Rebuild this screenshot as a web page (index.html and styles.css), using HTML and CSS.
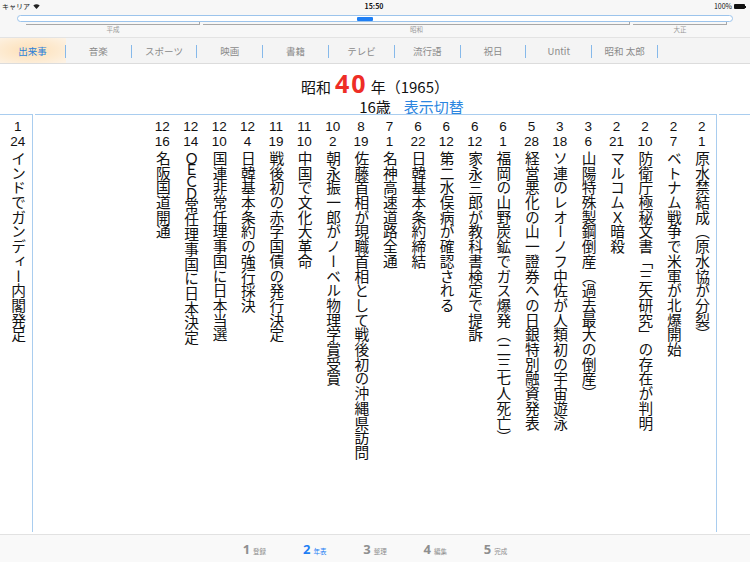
FILE: index.html
```html
<!DOCTYPE html>
<html lang="ja">
<head>
<meta charset="utf-8">
<title>年表</title>
<link rel="stylesheet" href="styles.css">
</head>
<body>
<div class="statusbar">
  <div class="sb-left">
    <span>キャリア</span>
    <svg class="wifi" width="7" height="5" viewBox="0 0 14 10"><path d="M7 10 L0.6 3.2 A9.5 9.5 0 0 1 13.4 3.2 Z" fill="#222"/></svg>
  </div>
  <div class="sb-time">15:50</div>
  <div class="sb-right">
    <span>100%</span>
    <span class="battery"><span class="bat-body"></span><span class="bat-nub"></span></span>
  </div>
</div>

<div class="timeline">
  <div class="track"><div class="thumb" style="left: 339px"></div></div>
  <div class="eras">
    <div class="era" style="width: 174px"><div class="era-line"></div><div class="era-label">平成</div></div>
    <div class="era" style="width: 427px"><div class="era-line"></div><div class="era-label">昭和</div></div>
    <div class="era" style="width: 94px"><div class="era-line"></div><div class="era-label">大正</div></div>
  </div>
</div>

<nav class="tabs">
  <div class="tab selected"><span class="tab-label">出来事</span></div>
  <div class="tab"><span class="tab-label">音楽</span></div>
  <div class="tab"><span class="tab-label">スポーツ</span></div>
  <div class="tab"><span class="tab-label">映画</span></div>
  <div class="tab"><span class="tab-label">書籍</span></div>
  <div class="tab"><span class="tab-label">テレビ</span></div>
  <div class="tab"><span class="tab-label">流行語</span></div>
  <div class="tab"><span class="tab-label">祝日</span></div>
  <div class="tab"><span class="tab-label">Untit</span></div>
  <div class="tab"><span class="tab-label">昭和 太郎</span></div>
</nav>

<header class="yearhead">
  <div class="yh-line1"><span>昭和</span><span class="yh-num">40</span><span>年（1965）</span></div>
  <div class="yh-line2"><span class="yh-age">16歳</span><span class="yh-toggle">表示切替</span></div>
</header>

<main class="pages">
  <section class="page page-prev">
    <div class="event"><div class="md">1<br>24</div><div class="txt">インドでガンディー内閣発足</div></div>
  </section>
  <section class="page page-cur">
    <div class="event"><div class="md">2<br>1</div><div class="txt">原水禁結成（原水協が分裂）</div></div>
    <div class="event"><div class="md">2<br>7</div><div class="txt">ベトナム戦争で米軍が北爆開始</div></div>
    <div class="event"><div class="md">2<br>10</div><div class="txt">防衛庁極秘文書「三矢研究」の存在が判明</div></div>
    <div class="event"><div class="md">2<br>21</div><div class="txt">マルコムＸ暗殺</div></div>
    <div class="event"><div class="md">3<br>6</div><div class="txt">山陽特殊製鋼倒産（過去最大の倒産）</div></div>
    <div class="event"><div class="md">3<br>18</div><div class="txt">ソ連のレオーノフ中佐が人類初の宇宙遊泳</div></div>
    <div class="event"><div class="md">5<br>28</div><div class="txt">経営悪化の山一證券への日銀特別融資発表</div></div>
    <div class="event"><div class="md">6<br>1</div><div class="txt">福岡の山野炭鉱でガス爆発（二三七人死亡）</div></div>
    <div class="event"><div class="md">6<br>12</div><div class="txt">家永三郎が教科書検定で提訴</div></div>
    <div class="event"><div class="md">6<br>12</div><div class="txt">第二水俣病が確認される</div></div>
    <div class="event"><div class="md">6<br>22</div><div class="txt">日韓基本条約締結</div></div>
    <div class="event"><div class="md">7<br>1</div><div class="txt">名神高速道路全通</div></div>
    <div class="event"><div class="md">8<br>19</div><div class="txt">佐藤首相が現職首相として戦後初の沖縄県訪問</div></div>
    <div class="event"><div class="md">10<br>2</div><div class="txt">朝永振一郎がノーベル物理学賞受賞</div></div>
    <div class="event"><div class="md">11<br>10</div><div class="txt">中国で文化大革命</div></div>
    <div class="event"><div class="md">11<br>19</div><div class="txt">戦後初の赤字国債の発行決定</div></div>
    <div class="event"><div class="md">12<br>4</div><div class="txt">日韓基本条約の強行採決</div></div>
    <div class="event"><div class="md">12<br>10</div><div class="txt">国連非常任理事国に日本当選</div></div>
    <div class="event"><div class="md">12<br>14</div><div class="txt"><span class="latin">ＯＥＣＤ</span>常任理事国に日本決定</div></div>
    <div class="event"><div class="md">12<br>16</div><div class="txt">名阪国道開通</div></div>
  </section>
  <section class="page page-next"></section>
</main>

<footer class="steps">
  <div class="step"><span class="step-num">1</span><span class="step-label">登録</span></div>
  <div class="step active"><span class="step-num">2</span><span class="step-label">年表</span></div>
  <div class="step"><span class="step-num">3</span><span class="step-label">整理</span></div>
  <div class="step"><span class="step-num">4</span><span class="step-label">編集</span></div>
  <div class="step"><span class="step-num">5</span><span class="step-label">完成</span></div>
</footer>
</body>
</html>
```

FILE: styles.css
```css
* {
  box-sizing: border-box;
  margin: 0;
  padding: 0;
}

html,
body {
  width: 750px;
  height: 562px;
  overflow: hidden;
}

body {
  font-family: "Noto Sans CJK JP", "Noto Sans", sans-serif;
  color: #111;
  background: #fff;
  display: flex;
  flex-direction: column;
}

/* status bar */
.statusbar {
  height: 13px;
  flex: none;
  background: #f7f7f7;
  display: grid;
  grid-template-columns: 1fr auto 1fr;
  align-items: center;
  padding: 0 4px 0 2px;
  font-size: 7px;
  line-height: 13px;
  color: #111;
}

.sb-left {
  display: flex;
  align-items: center;
  gap: 3px;
}

.sb-time {
  font-weight: 700;
}

.sb-right {
  justify-self: end;
  display: flex;
  align-items: center;
  gap: 2px;
}

.battery {
  display: flex;
  align-items: center;
}

.bat-body {
  width: 11px;
  height: 5px;
  background: #111;
  border-radius: 1px;
}

.bat-nub {
  width: 1px;
  height: 2px;
  background: #111;
}

/* timeline slider */
.timeline {
  height: 24px;
  flex: none;
  background: #f7f7f7;
  padding-top: 2px;
}

.track {
  position: relative;
  margin: 0 17px;
  height: 7px;
  border: 1px solid #9cc4ec;
  border-radius: 4px;
  background: #fff;
}

.thumb {
  position: absolute;
  top: 1px;
  width: 16px;
  height: 4px;
  background: #1f7ff4;
  border-radius: 1px;
}

.eras {
  display: flex;
  margin-left: 26px;
  gap: 3px;
}

.era {
  display: flex;
  flex-direction: column;
}

.era-line {
  height: 3px;
  border-bottom: 1px solid #a8a8a8;
  border-right: 1px solid #a8a8a8;
}

.era-label {
  font-size: 6.5px;
  line-height: 8px;
  color: #9a9a9a;
  text-align: center;
}

/* tabs */
.tabs {
  height: 27px;
  flex: none;
  background: #f4f4f4;
  border-top: 1px solid #e3e3e3;
  border-bottom: 1px solid #dcdcdc;
  display: flex;
}

.tab {
  width: 65.8px;
  flex: none;
  display: flex;
  align-items: center;
  padding-top: 1px;
}

.tab.selected {
  background: radial-gradient(ellipse at 45% 50%, #fde0b8 0%, #fdebd2 60%, #fdf3e6 100%);
}

.tab-label {
  flex: 1;
  height: 13px;
  line-height: 13px;
  border-right: 1px solid #86b9ea;
  text-align: center;
  font-size: 9.5px;
  color: #8a8a8a;
}

.tab.selected .tab-label {
  color: #2a7fd8;
}

/* year header */
.yearhead {
  height: 50px;
  flex: none;
  display: flex;
  flex-direction: column;
  align-items: center;
  padding-top: 8px;
}

.yh-line1 {
  display: flex;
  align-items: baseline;
  font-size: 15px;
  line-height: 22px;
}

.yh-num {
  font-family: "Noto Sans", sans-serif;
  font-size: 25px;
  font-weight: 700;
  color: #ee2d26;
  margin: 0 3px 0 4px;
  letter-spacing: 2px;
}

.yh-line2 {
  width: 100%;
  display: grid;
  grid-template-columns: 1fr auto 1fr;
  font-size: 15px;
  line-height: 18px;
}

.yh-age {
  grid-column: 2;
}

.yh-toggle {
  color: #2c86e0;
  margin-left: 13px;
}

/* pages */
.pages {
  height: 418px;
  flex: none;
  display: flex;
}

.page {
  border-top: 1px solid #a9cdef;
  border-right: 1px solid #a9cdef;
  display: flex;
  flex-direction: row-reverse;
  padding-top: 4px;
  overflow: hidden;
  flex: none;
}

.page-prev {
  width: 33px;
}

.page-cur {
  width: 682px;
  margin-left: 2px;
}

.page-next {
  flex: 1;
  margin-left: 2px;
  border-right: none;
}

.event {
  width: 28.4px;
  flex: none;
  display: flex;
  flex-direction: column;
  align-items: center;
}

.md {
  font-family: "Liberation Sans", "Noto Sans", sans-serif;
  font-size: 13.5px;
  line-height: 15.2px;
  white-space: nowrap;
  text-align: center;
}

.txt {
  writing-mode: vertical-rl;
  font-size: 14.7px;
  line-height: 1;
  margin-top: 2px;
  white-space: nowrap;
}

.latin {
  letter-spacing: -3px;
}

/* bottom steps */
.steps {
  margin-top: 2px;
  height: 28px;
  flex: none;
  border-top: 1px solid #e2e2e2;
  background: #f9f9f9;
  display: flex;
  justify-content: center;
  align-items: center;
}

.step {
  width: 60.3px;
  display: flex;
  align-items: baseline;
  justify-content: center;
  gap: 3px;
  color: #8f8f8f;
}

.step-num {
  font-family: "Noto Sans", sans-serif;
  font-size: 13px;
  font-weight: 700;
}

.step-label {
  font-size: 6.5px;
}

.step.active {
  color: #1f7ff4;
}
```
